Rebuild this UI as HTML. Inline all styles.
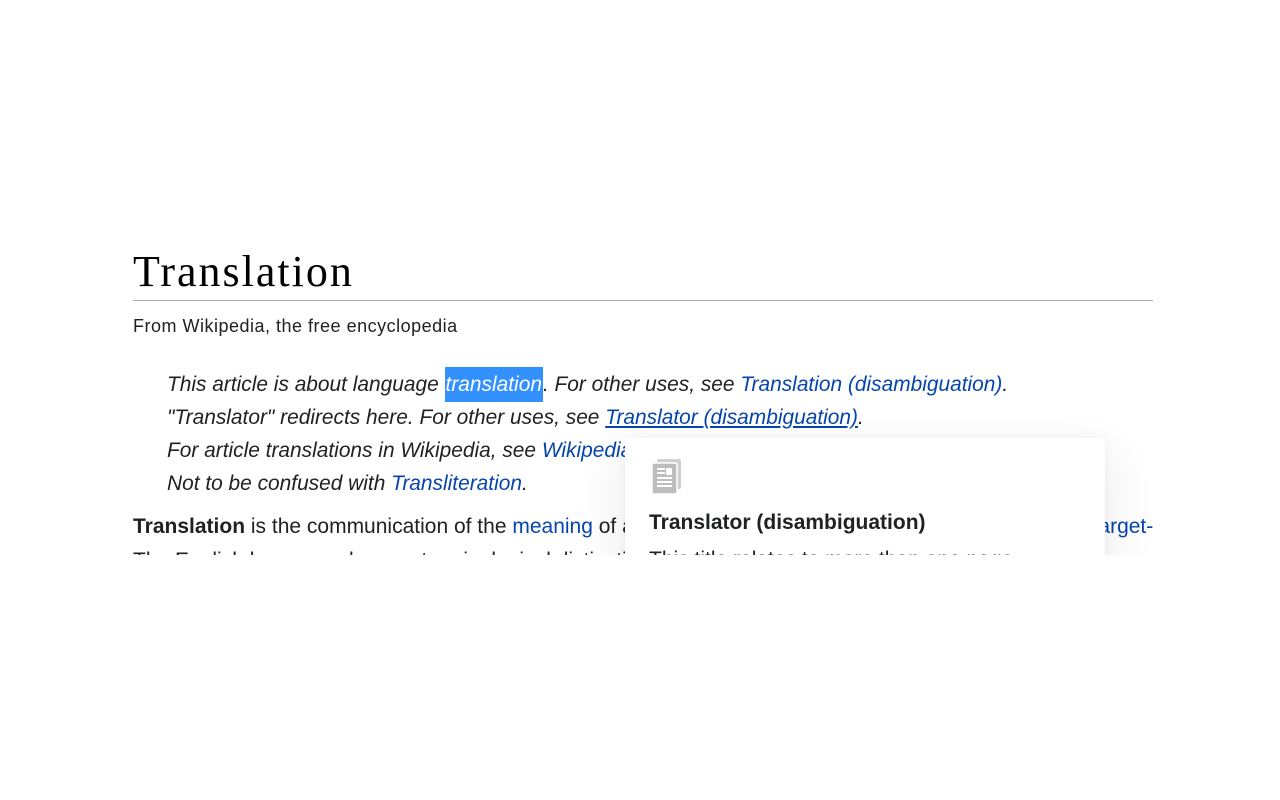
<!DOCTYPE html>
<html><head><style>
body{margin:0;background:#fff;width:1280px;height:800px;overflow:hidden;font-family:"Liberation Sans",Arial,sans-serif;color:#202122}
#clip{position:absolute;left:0;top:0;width:1153px;height:555px;overflow:hidden}
h1{position:absolute;left:133px;top:246px;margin:0;font:400 44px "Liberation Serif",Georgia,serif;letter-spacing:2px;color:#000;white-space:nowrap}
#hr{position:absolute;left:133px;top:300px;width:1020px;height:1px;background:#a2a9b1}
#sub{position:absolute;left:133px;top:316px;font-size:18px;letter-spacing:0.5px;white-space:nowrap}
.hn{position:absolute;left:167px;font-style:italic;font-size:20.9px;white-space:nowrap}
a{color:#0645ad;text-decoration:none}
a.u{text-decoration:underline}
.sel{background:#3390ff;color:#fff;padding:6px 1px 6px 1px}
.p{position:absolute;left:133px;font-size:21px;white-space:nowrap}
#pop{position:absolute;left:625px;top:438px;width:480px;height:140px;background:#fff;border-radius:4px;box-shadow:0 20px 48px 10px rgba(0,0,0,0.06),0 0 10px rgba(0,0,0,0.05)}
#pt{position:absolute;left:24px;top:73px;font-weight:bold;font-size:21px;color:#202122;white-space:nowrap}
#pd{position:absolute;left:24px;top:110px;font-size:21px;white-space:nowrap}
</style></head><body>
<div id="clip">
<h1>Translation</h1>
<div id="hr"></div>
<div id="sub">From Wikipedia, the free encyclopedia</div>
<div class="hn" style="top:373px">This article is about language <span class="sel">translation</span>. For other uses, see <a>Translation (disambiguation)</a>.</div>
<div class="hn" style="top:406px">"Translator" redirects here. For other uses, see <a class="u">Translator (disambiguation)</a>.</div>
<div class="hn" style="top:439px">For article translations in Wikipedia, see <a>Wikipedia:Translation</a>.</div>
<div class="hn" style="top:472px">Not to be confused with <a>Transliteration</a>.</div>
<div class="p" style="top:515px"><b>Translation</b> is the communication of the <a>meaning</a> of a source-language text by means of an equivalent <a>target-</a></div>
<div class="p" style="top:549px">The English language draws a terminological distinction between translating and interpreting</div>
<div id="pop">
<svg style="position:absolute;left:26px;top:21px" width="32" height="36" viewBox="0 0 32 36">
<rect x="6" y="0" width="24" height="30" rx="2" fill="#d0d0d0"/>
<rect x="1" y="4" width="25" height="31" rx="2" fill="#bdbdbd" stroke="#fff" stroke-width="1.5"/>
<rect x="6" y="9" width="8" height="2" fill="#fff"/><rect x="6" y="13" width="8" height="2" fill="#fff"/>
<rect x="15" y="9" width="6" height="7" fill="#fff"/>
<rect x="6" y="18" width="15" height="2" fill="#fff"/><rect x="6" y="22" width="15" height="2" fill="#fff"/><rect x="6" y="26" width="15" height="2" fill="#fff"/>
</svg>
<div id="pt">Translator (disambiguation)</div>
<div id="pd">This title relates to more than one page</div>
</div>
</div>
</body></html>
